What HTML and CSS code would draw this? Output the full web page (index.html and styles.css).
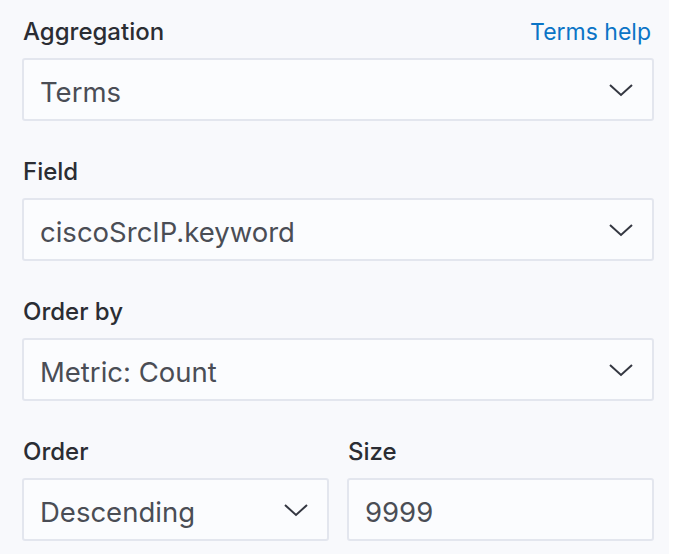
FILE: index.html
```html
<!DOCTYPE html>
<html>
<head>
<meta charset="utf-8">
<link rel="stylesheet" href="styles.css">
</head>
<body>
<div class="panel">
  <div class="row">
    <div class="field">
      <div class="label-row">
        <span class="label">Aggregation</span>
        <a class="help" href="#">Terms help</a>
      </div>
      <div class="control">
        <span class="value">Terms</span>
        <svg class="chev" width="24" height="14" viewBox="0 0 24 14"><path d="M1 2 L12 12 L23 2" fill="none" stroke="#343741" stroke-width="2"/></svg>
      </div>
    </div>
  </div>
  <div class="row">
    <div class="field">
      <div class="label-row"><span class="label">Field</span></div>
      <div class="control">
        <span class="value">ciscoSrcIP.keyword</span>
        <svg class="chev" width="24" height="14" viewBox="0 0 24 14"><path d="M1 2 L12 12 L23 2" fill="none" stroke="#343741" stroke-width="2"/></svg>
      </div>
    </div>
  </div>
  <div class="row">
    <div class="field">
      <div class="label-row"><span class="label">Order by</span></div>
      <div class="control">
        <span class="value">Metric: Count</span>
        <svg class="chev" width="24" height="14" viewBox="0 0 24 14"><path d="M1 2 L12 12 L23 2" fill="none" stroke="#343741" stroke-width="2"/></svg>
      </div>
    </div>
  </div>
  <div class="row split">
    <div class="field">
      <div class="label-row"><span class="label">Order</span></div>
      <div class="control">
        <span class="value">Descending</span>
        <svg class="chev" width="24" height="14" viewBox="0 0 24 14"><path d="M1 2 L12 12 L23 2" fill="none" stroke="#343741" stroke-width="2"/></svg>
      </div>
    </div>
    <div class="field">
      <div class="label-row"><span class="label">Size</span></div>
      <div class="control">
        <span class="value">9999</span>
      </div>
    </div>
  </div>
</div>
</body>
</html>
```
FILE: styles.css
```css
html, body {
  margin: 0;
  padding: 0;
  background: #ffffff;
}
body {
  font-family: Inter, "Noto Sans", sans-serif;
}
.panel {
  width: 669px;
  height: 554px;
  background: #f8f9fc;
  box-sizing: border-box;
  padding: 14px 0 0 22px;
  overflow: hidden;
}
.row {
  width: 632px;
  margin-bottom: 33px;
}
.row.split {
  display: grid;
  grid-template-columns: 307px 307px;
  column-gap: 18px;
}
.label-row {
  display: flex;
  justify-content: space-between;
  align-items: baseline;
  height: 36px;
  margin-bottom: 8px;
}
.label {
  font-size: 24px;
  font-weight: 500;
  color: #2b2d33;
  line-height: 36px;
  padding-left: 1px;
}
.help {
  font-size: 23px;
  color: #0b74c6;
  text-decoration: none;
  line-height: 36px;
  margin-right: 3px;
}
.control {
  height: 63px;
  box-sizing: border-box;
  border: 2px solid #e3e6ee;
  border-radius: 3px;
  background: #fbfcfe;
  display: flex;
  align-items: center;
  justify-content: space-between;
  padding: 4px 19px 0 16px;
}
.value {
  font-size: 27.5px;
  color: #4a4d55;
}
.chev {
  display: block;
  margin-top: -4px;
}
```
